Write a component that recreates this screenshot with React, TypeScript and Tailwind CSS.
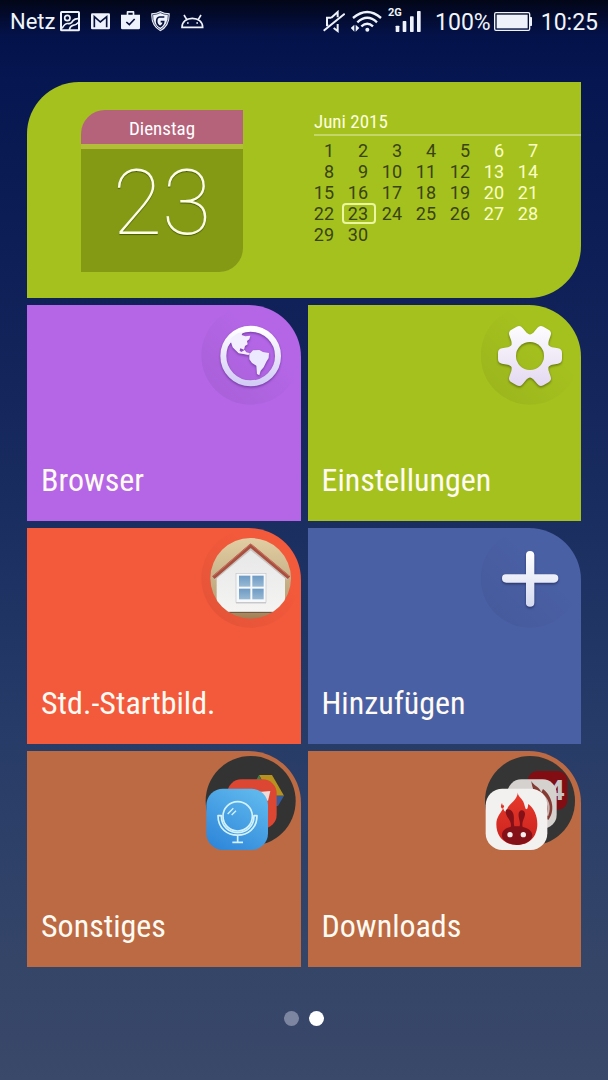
import type { ReactNode } from "react";

const weeks = [
  [1, 2, 3, 4, 5, 6, 7],
  [8, 9, 10, 11, 12, 13, 14],
  [15, 16, 17, 18, 19, 20, 21],
  [22, 23, 24, 25, 26, 27, 28],
  [29, 30],
];

const today = 23;

function StatusBar() {
  return (
    <header className="flex h-11 items-center justify-between px-[10px] text-[23px] leading-none text-slate-100">
      <div className="flex items-center gap-[11px]">
        <div className="flex items-center gap-[5px]">
          <span className="text-[22px]">Netz</span>
          {/* screenshot */}
          <svg viewBox="183 30 60 72" className="h-6 w-5" fill="none" stroke="#eef2fb" strokeWidth="6">
            <rect x="186" y="36" width="54" height="55" rx="2" />
            <circle cx="205" cy="54" r="8" strokeWidth="5" />
            <path d="M189 85Q199 68 209 71Q217 72 222 62Q228 55 240 56M211 90Q213 78 222 76Q232 75 240 66" strokeWidth="5" />
          </svg>
        </div>
        {/* mail */}
        <svg viewBox="276 30 57 72" className="h-6 w-[19px]">
          <rect x="276" y="40" width="57" height="48" rx="4" fill="#eef2fb" />
          <path d="M286 82V50L304 66L323 50V82" fill="none" stroke="#06103c" strokeWidth="5" />
        </svg>
        {/* store */}
        <svg viewBox="366 30 57 72" className="h-6 w-[19px]">
          <path d="M366 44H383V36Q383 33 386 33H403Q406 33 406 36V44H423V84Q423 88 419 88H370Q366 88 366 84ZM388 38V44H401V38Z" fill="#eef2fb" fillRule="evenodd" />
          <path d="M382 66L391 74L407 57" fill="none" stroke="#06103c" strokeWidth="5" />
        </svg>
        {/* shield */}
        <svg viewBox="458 30 57 72" className="h-6 w-[19px]">
          <path d="M486 33Q498 40 514 40Q516 78 486 94Q456 78 459 40Q475 40 486 33Z" fill="#eef2fb" />
          <path d="M486 38Q497 44 510 44Q510 75 486 89Q462 75 463 44Q475 44 486 38Z" fill="none" stroke="#06103c" strokeWidth="2" />
          <path d="M498 51H484Q475 52 475 64Q475 76 486 80Q495 75 496 65H487" fill="none" stroke="#06103c" strokeWidth="5" />
        </svg>
        {/* android */}
        <svg viewBox="543 30 69 72" className="h-6 w-[23px]" fill="none" stroke="#eef2fb" strokeWidth="5">
          <path d="M546 82C546 65 560 55 577 55C594 55 608 65 608 82ZM560 58L552 45M595 58L603 45" />
          <path d="M561 69H566M589 69H594" />
        </svg>
      </div>

      <div className="flex items-center gap-[9px]">
        <div className="flex items-center gap-[6px]">
          {/* muted */}
          <svg viewBox="30 30 66 72" className="h-6 w-[22px]" fill="none" stroke="#eef2fb" strokeWidth="6">
            <path d="M55 53H42V76H46M62 84L74 93V72M55 53L74 36V52" />
            <path d="M32 92L95 41" />
          </svg>
          {/* wifi */}
          <svg viewBox="115 30 93 72" className="h-6 w-[31px]" fill="none" stroke="#eef2fb" strokeWidth="7">
            <path d="M121 54Q164 18 205 54M134 67Q164 40 193 67M146 79Q164 63 181 79" />
            <circle cx="164" cy="89" r="6" fill="#eef2fb" stroke="none" />
            <path d="M114 84L125 74V95ZM140 84L129 74V95Z" fill="#eef2fb" stroke="none" />
          </svg>
          {/* signal */}
          <svg viewBox="224 18 99 96" className="h-8 w-[33px]" fill="#eef2fb">
            <text x="224" y="47" fontSize="33" fontWeight="700">2G</text>
            <rect x="247" y="77" width="11" height="19" rx="2" />
            <rect x="268" y="63" width="11" height="33" rx="2" />
            <rect x="290" y="49" width="11" height="47" rx="2" />
            <rect x="311" y="33" width="11" height="63" rx="2" />
          </svg>
        </div>
        <div className="flex items-center gap-[3px] pl-[5px]">
          <span>100%</span>
          {/* battery */}
          <svg viewBox="546 30 114 72" className="h-6 w-[38px]" fill="#eef2fb">
            <rect x="548" y="38" width="105" height="53" rx="4" fill="none" stroke="#eef2fb" strokeWidth="4" />
            <rect x="554" y="44" width="93" height="41" />
            <rect x="653" y="51" width="7" height="27" rx="2" />
          </svg>
        </div>
        <time>10:25</time>
      </div>
    </header>
  );
}

function CalendarWidget() {
  return (
    <section className="col-span-2 flex min-h-[216px] justify-between rounded-tl-[52px] rounded-br-[52px] bg-[#a5c11e]">
      <div className="mt-7 ml-[54px] flex h-[162px] w-[162px] flex-col gap-[5px] overflow-hidden rounded-tl-3xl rounded-br-3xl bg-[#b2bd38] text-center text-white">
        <h2 className="h-[34px] bg-[#b5637b] pt-px font-['Roboto_Condensed',Roboto,sans-serif] text-[19px] leading-9">
          Dienstag
        </h2>
        <p className="flex-1 bg-[#849a15] text-[90px] leading-[110px] font-thin text-[#feffe8] [text-shadow:0_1px_1px_#4a5a00]">
          23
        </p>
      </div>
      <div className="w-[273px] pt-7">
        <h2 className="ml-[6px] border-b-2 border-[#c4d668] font-['Roboto_Condensed',Roboto,sans-serif] text-[19px] leading-6 text-[#fdffdf]">
          Juni 2015
        </h2>
        <table aria-label="Juni 2015" className="mt-1 table-fixed border-collapse text-[18px] leading-[21px] text-[#3a4412]">
          <tbody>
            {weeks.map((week) => (
              <tr key={week[0]}>
                {week.map((day, i) => (
                  <td
                    key={day}
                    className={`h-[21px] w-[34px] p-0 text-right ${i > 4 ? "text-[#fbffc4]" : ""}`}
                  >
                    <span
                      className={`block pr-2 ${day === today ? "rounded-sm ring-2 ring-[#ecf5a0] ring-inset" : ""}`}
                    >
                      {day}
                    </span>
                  </td>
                ))}
              </tr>
            ))}
          </tbody>
        </table>
      </div>
    </section>
  );
}

function GlobeIcon() {
  return (
    <svg viewBox="31 15 300 300" className="size-[100px]">
      <defs>
        <linearGradient id="globe" x1="0" y1="0" x2="0" y2="1">
          <stop offset="0" stopColor="#ffffff" />
          <stop offset="1" stopColor="#d3cdf5" />
        </linearGradient>
        <linearGradient id="disc" x1="1" y1="0" x2="0" y2="1">
          <stop offset="0.35" stopColor="#000" stopOpacity="0" />
          <stop offset="1" stopColor="#000" stopOpacity="0.07" />
        </linearGradient>
      </defs>
      <circle cx="180" cy="166" r="148" fill="url(#disc)" />
      <g className="drop-shadow-[0_4px_3px_rgba(60,20,110,0.5)]">
        <circle cx="180" cy="168" r="82" fill="none" stroke="url(#globe)" strokeWidth="18" />
        <path
          d="M112 137L122 113L141 100L157 96L153 105L164 109L179 107L176 118L169 123L171 133L163 138L160 149L149 145L147 152L152 156L162 150L167 157L178 160L173 165L158 162L144 160L134 150L126 142L121 127Z"
          fill="#f3efff"
        />
        <path
          d="M176 163L187 151L206 150L217 156L235 159L234 174L227 185L219 202L210 212L206 226L199 222L197 197L184 189L176 178Z"
          fill="#ece8fd"
        />
      </g>
    </svg>
  );
}

function GearIcon() {
  return (
    <svg viewBox="33 15 300 300" className="size-[100px]">
      <defs>
        <linearGradient id="gear" x1="0" y1="0" x2="0" y2="1">
          <stop offset="0" stopColor="#ffffff" />
          <stop offset="1" stopColor="#e2d6f0" />
        </linearGradient>
        <mask id="gearShape">
          <g fill="#fff" stroke="#fff" strokeWidth="14" strokeLinejoin="round">
            {[0, 60, 120, 180, 240, 300].map((angle) => (
              <path key={angle} d="M180 168L229 140Q238 147 246 149L263 152Q269 153 269 159V177Q269 183 263 184L246 187Q238 189 229 196Z" transform={`rotate(${angle} 180 168)`} />
            ))}
          </g>
          <circle cx="180" cy="168" r="42" fill="#000" />
        </mask>
      </defs>
      <circle cx="180" cy="166" r="148" fill="url(#disc)" />
      <g className="drop-shadow-[0_4px_3px_rgba(60,70,0,0.6)]">
        <rect x="75" y="65" width="210" height="206" fill="url(#gear)" mask="url(#gearShape)" />
      </g>
    </svg>
  );
}

function HouseIcon() {
  return (
    <svg viewBox="31 9 300 300" className="size-[100px]">
      <defs>
        <linearGradient id="sky" x1="0" y1="0" x2="0" y2="1">
          <stop offset="0" stopColor="#e3cfa5" />
          <stop offset="0.8" stopColor="#b9a077" />
          <stop offset="1" stopColor="#a07a50" />
        </linearGradient>
        <linearGradient id="wall" x1="0" y1="0" x2="0" y2="1">
          <stop offset="0" stopColor="#e6e7e7" />
          <stop offset="1" stopColor="#f5f4f3" />
        </linearGradient>
        <linearGradient id="pane" x1="0" y1="0" x2="0" y2="1">
          <stop offset="0" stopColor="#6d9ac4" />
          <stop offset="1" stopColor="#98b9d4" />
        </linearGradient>
        <clipPath id="round">
          <circle cx="180" cy="160" r="121" />
        </clipPath>
      </defs>
      <circle cx="180" cy="160" r="148" fill="url(#disc)" />
      <g clipPath="url(#round)">
        <rect x="55" y="35" width="250" height="250" fill="url(#sky)" />
        <path d="M78 160L180 70L283 160V262H78Z" fill="url(#wall)" />
        <path d="M78 262H283" stroke="#604a38" strokeWidth="3" />
        <path d="M71 163L180 72L291 163" fill="none" stroke="#c9c4c0" strokeWidth="6" />
        <path d="M68 158L180 62L295 158" fill="none" stroke="#a84f40" strokeWidth="11" strokeLinejoin="round" />
        <path d="M68 153L180 57L295 153" fill="none" stroke="#cb7566" strokeWidth="3" strokeLinejoin="round" />
        <rect x="136" y="149" width="90" height="86" fill="#b9b8b9" />
        <rect x="136" y="145" width="90" height="87" fill="#f7f8fa" stroke="#c3c6cb" strokeWidth="2" />
        <g fill="url(#pane)">
          <rect x="145" y="152" width="34" height="33" />
          <rect x="185" y="152" width="34" height="33" />
          <rect x="145" y="191" width="34" height="32" />
          <rect x="185" y="191" width="34" height="32" />
        </g>
      </g>
    </svg>
  );
}

function PlusIcon() {
  return (
    <svg viewBox="33 9 300 300" className="size-[100px]">
      <defs>
        <linearGradient id="plus" gradientUnits="userSpaceOnUse" x1="0" y1="78" x2="0" y2="245">
          <stop offset="0" stopColor="#ffffff" />
          <stop offset="1" stopColor="#d5daf0" />
        </linearGradient>
      </defs>
      <circle cx="180" cy="160" r="148" fill="url(#disc)" />
      <g className="drop-shadow-[0_4px_3px_rgba(20,25,70,0.6)]">
        <path
          d="M168 90Q168 78 180 78T193 90V148H252Q265 148 265 160T252 173H193V233Q193 245 180 245T168 233V173H109Q96 173 96 160T109 148H168Z"
          fill="url(#plus)"
        />
      </g>
    </svg>
  );
}

function MiscFolderIcon() {
  return (
    <svg viewBox="31 18 300 300" className="size-[100px]">
      <defs>
        <linearGradient id="mirror" x1="0.8" y1="0" x2="0.2" y2="1">
          <stop offset="0" stopColor="#60b9ed" />
          <stop offset="1" stopColor="#2f87da" />
        </linearGradient>
      </defs>
      <circle cx="180" cy="168" r="135" fill="#333333" />
      <path d="M205 90H244L280 152H240Z" fill="#b8921f" />
      <path d="M205 90L193 112H216Z" fill="#3f7f48" />
      <path d="M240 152H280L262 183H230Z" fill="#365c9c" />
      <rect x="110" y="103" width="148" height="148" rx="42" fill="#db4733" />
      <path d="M196 142L239 138L232 168L216 158Z" fill="#f1dcda" />
      <rect x="47" y="131" width="185" height="184" rx="50" fill="url(#mirror)" />
      <g fill="none" stroke="#d4f2fb" strokeWidth="5" strokeLinejoin="round">
        <circle cx="141" cy="214" r="44" />
        <path d="M82 212H92C92 280 190 280 190 212H199C199 290 82 290 82 212ZM141 271V291M125 292H157" />
        <path d="M111 207L128 190M123 210L136 197" strokeWidth="4" />
      </g>
    </svg>
  );
}

function DownloadsFolderIcon() {
  return (
    <svg viewBox="33 18 300 300" className="size-[100px]">
      <defs>
        <linearGradient id="flame" x1="0" y1="0" x2="0" y2="1">
          <stop offset="0" stopColor="#e83a2c" />
          <stop offset="1" stopColor="#cb221d" />
        </linearGradient>
      </defs>
      <circle cx="180" cy="168" r="135" fill="#353535" />
      <rect x="174" y="78" width="118" height="116" rx="28" fill="#820d12" />
      <text x="236" y="165" fontSize="84" fontWeight="700" fill="#c6c4c6">4</text>
      <rect x="112" y="103" width="148" height="148" rx="42" fill="#d5d1cf" />
      <path d="M184 108C192 124 206 122 214 142L219 132C250 156 256 200 234 226L222 205C226 180 187 150 184 108Z" fill="#843b34" />
      <path d="M208 142C233 160 242 184 232 212" fill="none" stroke="#c9b4b0" strokeWidth="6" />
      <rect x="47" y="131" width="185" height="184" rx="50" fill="#f2f1f0" />
      <path
        d="M144 142C142 153 154 157 160 170C164 180 165 188 168 193C175 192 173 183 175 177C192 190 202 213 202 237C202 273 180 300 141 300C101 300 79 273 79 238C79 217 91 205 100 190C102 200 106 201 111 200C108 179 139 174 144 142ZM96 174C92 181 91 187 97 191C104 187 104 180 98 181Z"
        fill="url(#flame)"
      />
      <path
        d="M96 271C96 256 109 248 122 246C128 228 106 216 107 200C106 189 122 192 128 202C135 215 129 232 133 244H149C153 230 142 216 147 202C153 189 167 198 165 209C163 221 154 231 158 246C175 249 187 259 187 271C187 289 163 298 141 300C118 298 96 289 96 271Z"
        fill="#841018"
      />
      <circle cx="120" cy="269" r="8" fill="#f5eeee" />
      <circle cx="160" cy="269" r="8" fill="#f5eeee" />
    </svg>
  );
}

interface ITile {
  label: string;
  color: string;
  icon: ReactNode;
}

const tiles: ITile[] = [
  { label: "Browser", color: "bg-[#b466e6]", icon: <GlobeIcon /> },
  { label: "Einstellungen", color: "bg-[#a5c11e]", icon: <GearIcon /> },
  { label: "Std.-Startbild.", color: "bg-[#f3593b]", icon: <HouseIcon /> },
  { label: "Hinzufügen", color: "bg-[#4a60a5]", icon: <PlusIcon /> },
  { label: "Sonstiges", color: "bg-[#bb6a43]", icon: <MiscFolderIcon /> },
  { label: "Downloads", color: "bg-[#bb6a43]", icon: <DownloadsFolderIcon /> },
];

function Tile({ label, color, icon }: ITile) {
  return (
    <button
      type="button"
      className={`flex min-h-[216px] flex-col justify-between overflow-hidden rounded-tr-[52px] pb-5 text-left ${color}`}
    >
      <span className="self-end">{icon}</span>
      <span className="pl-[14px] font-['Roboto_Condensed',Roboto,sans-serif] text-[32px] leading-[42px] text-[#fffaf2]">
        {label}
      </span>
    </button>
  );
}

export default function App() {
  return (
    <div className="min-h-screen bg-[linear-gradient(to_bottom,#020617_0px,#04124a_36px,#061650_80px,#14265c_400px,#263b68_720px,#344568_960px,#3a4869_1080px)] font-[Roboto,sans-serif]">
      <StatusBar />
      <main className="grid grid-cols-2 gap-[7px] px-[27px] pt-[38px]">
        <CalendarWidget />
        {tiles.map((tile) => (
          <Tile key={tile.label} {...tile} />
        ))}
      </main>
      <nav aria-label="Seiten" className="flex justify-center gap-[10px] pt-11">
        <button type="button" aria-label="Seite 1" className="size-[15px] rounded-full bg-[#7d86a0]" />
        <button type="button" aria-label="Seite 2" aria-current="page" className="size-[15px] rounded-full bg-white" />
      </nav>
    </div>
  );
}
